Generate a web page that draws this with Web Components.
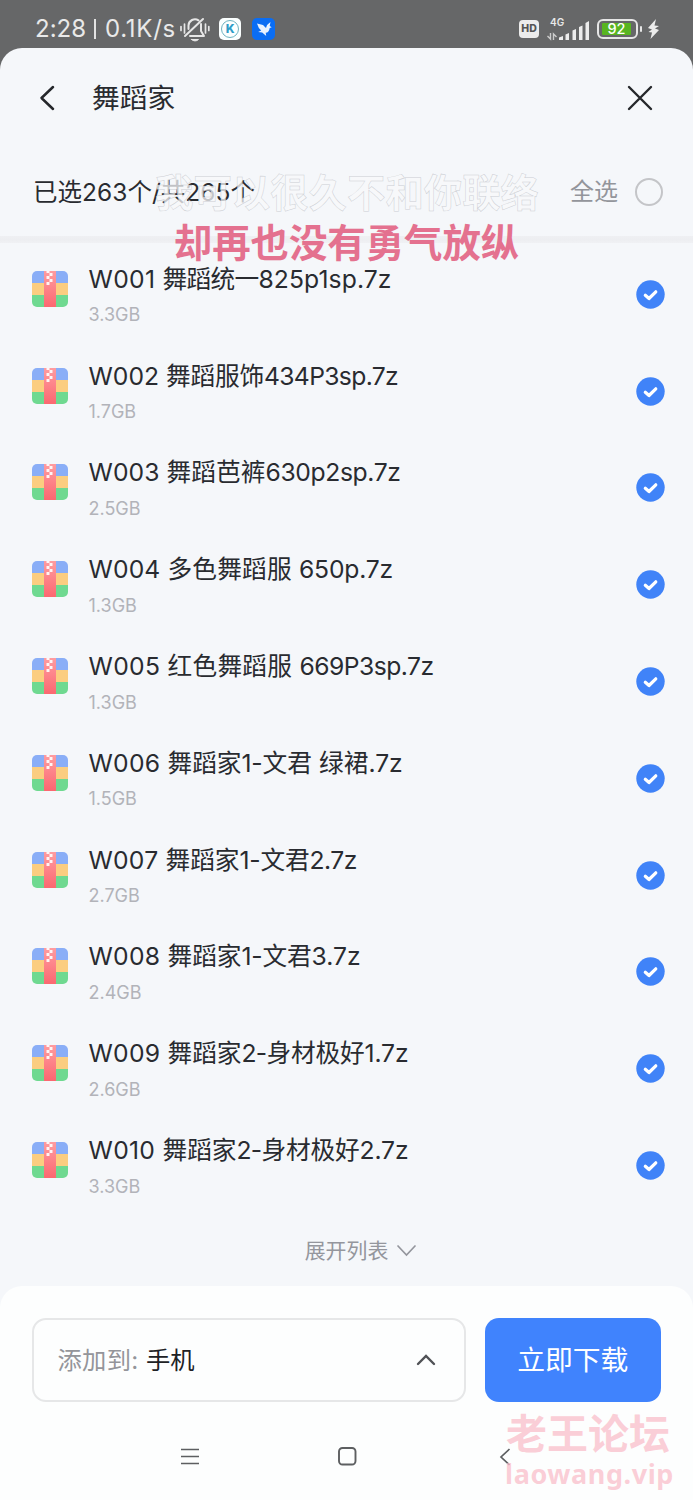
<!DOCTYPE html>
<html lang="zh-CN">
<head>
<meta charset="utf-8">
<title>舞蹈家</title>
<style>
html, body { margin: 0; padding: 0; }
body { width: 693px; height: 1500px; overflow: hidden; background: #666768; font-family: Inter, "Noto Sans CJK SC", sans-serif; color: #292b30; }
</style>
</head>
<body>
<download-app></download-app>
<script>
class FitText extends HTMLElement {
  connectedCallback() {
    const root = this.attachShadow({ mode: 'open' });
    root.innerHTML = `<style>:host{display:inline-block;white-space:pre;line-height:1}span{display:inline-block}</style><span><slot></slot></span>`;
    const span = root.querySelector('span');
    const goal = +this.getAttribute('w');
    const natural = span.getBoundingClientRect().width;
    span.style.letterSpacing = (goal - natural) / this.textContent.length + 'px';
  }
}
customElements.define('fit-text', FitText);

class StatusBar extends HTMLElement {
  connectedCallback() {
    this.attachShadow({ mode: 'open' }).innerHTML = `
<style>
:host{display:flex;height:48px;box-sizing:border-box;padding:9px 34px 0 35px;align-items:center;color:#e9e9e9;background:#666768}
.time{font-size:24px;margin-right:4px;white-space:pre;display:flex;align-items:center}
.bar{width:2px;height:20px;background:#e2e2e2;margin:0 9px 0 8px}
.k{margin-left:9px}.b{margin-left:11px}
svg{display:block;flex:none}
.gap{flex:1}
.hd{width:20px;height:18px;border-radius:4px;background:#ececec;color:#555;font:800 10.500px/18px Inter,sans-serif;text-align:center;margin-right:8px}
.net{display:grid;width:42px;height:24px;margin-right:8px;position:relative}
.net span{position:absolute;left:3px;top:0;font:600 10px/10px Inter,sans-serif}
.bat{display:flex;align-items:center}
.cell{width:41px;height:20px;box-sizing:border-box;border:2px solid #e6e6e6;border-radius:6px;padding:2px 4px 2px 3px}
.fill{height:12px;width:29px;background:#58b520;font:500 14.500px/12px Inter,sans-serif;color:#fff;text-align:center;border-radius:1px}
.tip{width:2px;height:6px;background:#e6e6e6;margin:0 6px 0 2px;border-radius:1px}
</style>
<span class="time"><fit-text w="51">2:28</fit-text><div class="bar"></div><fit-text w="71">0.1K/s</fit-text></span>
<svg width="30" height="28" viewBox="0 0 30 28" fill="none" stroke="#e6e6e6" stroke-width="2" stroke-linecap="round" stroke-linejoin="round"><path d="M8.500 14V10.500a6.500 6.500 0 0 1 10-5.200M21 9v7l3 5H10M5 21 23 4"/><path d="M11.500 24.500h7q-3.500 3-7 0z" fill="#e6e6e6" stroke-width="1"/><path d="M4.500 9v9M1 11.500v4M25.500 9v9M28.800 11.500v4" stroke-width="1.700"/></svg>
<svg class="k" width="22" height="22" viewBox="0 0 22 22"><rect width="22" height="22" rx="5" fill="#fbffff"/><circle cx="11" cy="11" r="8.500" fill="none" stroke="#5fa9b8" stroke-width=".9"/><text x="11.300" y="15.300" text-anchor="middle" font-family="Inter" font-size="12" font-weight="800" fill="#2e9dc8">K</text></svg>
<svg class="b" width="23" height="22" viewBox="0 0 23 22"><rect width="23" height="22" rx="5" fill="#0a6df3"/><path d="M5 5.500 11 7l3 3q1-4 4.500-6l-.8 4 2 1.300-2 .7q-.7 4.500-4 4.800l.5 3.200-4-3.500-4-.5 3-1.500q-3-2.500-4.200-7z" fill="#e8f2ff"/></svg>
<div class="gap"></div>
<div class="hd">HD</div>
<div class="net"><span>4G</span><svg width="42" height="24" viewBox="0 0 42 24" fill="#ececec"><path d="M12 20.500 16 19v4h-4zM18.500 17.500 22 16v7h-3.500zM25.500 13.500 29 12v11h-3.500zM32 10l3.500-1.500V23H32zM38.500 6 42 4v19h-3.500z"/><path d="M3.500 16v6l-3-3M6.500 23v-6l3 3" fill="none" stroke="#ccc" stroke-width="1.400"/></svg></div>
<div class="bat"><div class="cell"><div class="fill">92</div></div><div class="tip"></div>
<svg width="11" height="20" viewBox="0 0 11 20"><path d="M8 0 0 9l4 1.500L.5 13 4 13.500 2.500 20 11 11 7 9.500 11 7 6.500 6.500z" fill="#ececec"/></svg></div>`;
  }
}
customElements.define('status-bar', StatusBar);

class SheetHeader extends HTMLElement {
  connectedCallback() {
    this.attachShadow({ mode: 'open' }).innerHTML = `
<style>
:host{display:block;height:188px}
.top{height:99px;display:flex;align-items:center;padding:0 40px 0 39px;box-sizing:border-box}
h1{font-size:27.700px;line-height:40px;font-weight:400;margin:0 0 0 37px;flex:1}
.sum{height:89px;box-sizing:border-box;padding:0 30px 0 33px;display:flex;align-items:center;font-size:24.500px}
.n{flex:1}.all{color:#93959b;margin-right:17px;line-height:30px;margin-top:1px;font-size:24px}
i{width:28px;height:28px;border-radius:50%;border:2px solid #c4c5c8;box-sizing:border-box}
svg{display:block}
</style>
<div class="top">
<svg width="16" height="26" viewBox="0 0 16 26" fill="none" stroke="#25272b" stroke-width="2.500" stroke-linecap="round" stroke-linejoin="round"><path d="M14 2 2.500 13 14 24"/></svg>
<h1><slot name="title"></slot></h1>
<svg width="26" height="26" viewBox="0 0 26 26" fill="none" stroke="#25272b" stroke-width="2.400" stroke-linecap="round"><path d="M2 2l22 22M24 2 2 24"/></svg>
</div>
<div class="sum"><span class="n"><fit-text w="222">已选263个/共265个</fit-text></span><span class="all">全选</span><i></i></div>`;
  }
}
customElements.define('sheet-header', SheetHeader);

class FileRow extends HTMLElement {
  connectedCallback() {
    const parts = JSON.parse(this.getAttribute('parts'));
    this.attachShadow({ mode: 'open' }).innerHTML = `
<style>
:host{display:flex;height:96.8px;box-sizing:border-box;padding:0 28px 0 32px}
.ico{margin-top:27.800px}
.txt{flex:1;margin-left:20.500px;padding-top:19.900px}
.t{display:block;height:32px;line-height:32px;font-size:24.700px;white-space:pre}
.s{height:24px;margin-top:8.500px;line-height:24px;font-size:18px;color:#b2b3b9}
.ok{margin-top:36.900px}
svg{display:block;flex:none}
</style>
<svg class="ico" width="36" height="36" viewBox="0 0 36 36"><defs><clipPath id="c"><rect width="36" height="36" rx="5"/></clipPath><linearGradient id="g" x2="0" y2="1"><stop stop-color="#ff9ca0"/><stop offset="1" stop-color="#fb6870"/></linearGradient></defs><g clip-path="url(#c)"><path fill="#8aaef7" d="M0 0h36v12H0z"/><path fill="#fbcd80" d="M0 12h36v12H0z"/><path fill="#6fd990" d="M0 24h36v12H0z"/><path fill="url(#g)" d="M12 0h12v36H12z"/><path fill="#fff" opacity=".9" d="M14.500 0h3v2h-3zM17.500 2h3v3h-3zM14.500 5h3v3h-3zM17.500 8h3v3h-3zM14.500 11h3v3h-3z"/></g></svg>
<div class="txt"><div class="t">${parts.map(p => `<fit-text w="${p[1]}">${p[0]}</fit-text>`).join('')}</div>
<div class="s"><slot></slot></div></div>
<svg class="ok" width="29" height="29" viewBox="0 0 29 29"><circle cx="14.500" cy="14.500" r="14.200" fill="#4083f8"/><path d="M9.300 15.300l3.700 3.200 6.800-6.700" fill="none" stroke="#fff" stroke-width="3.200" stroke-linecap="round" stroke-linejoin="round"/></svg>`;
  }
}
customElements.define('file-row', FileRow);

class ExpandButton extends HTMLElement {
  connectedCallback() {
    this.attachShadow({ mode: 'open' }).innerHTML = `
<style>:host{display:flex;justify-content:center;align-items:center;height:75px;padding-top:5px;box-sizing:border-box;font-size:20.900px;line-height:30px;color:#94969d;padding-left:28px}svg{margin-left:9px}</style>
<slot></slot><svg width="19" height="12" viewBox="0 0 19 12" fill="none" stroke="#94969d" stroke-width="1.700" stroke-linecap="round"><path d="M1 1l8.500 9L18 1"/></svg>`;
  }
}
customElements.define('expand-button', ExpandButton);

class ActionPanel extends HTMLElement {
  connectedCallback() {
    this.attachShadow({ mode: 'open' }).innerHTML = `
<style>
:host{display:block;height:214px;background:#fdfefe;border-radius:22px 22px 0 0;box-sizing:border-box;padding-top:32px}
.row{display:flex;height:84.500px;padding:0 32px;gap:18.500px}
.sel{flex:1;box-sizing:border-box;border:2px solid #e6e7e8;border-radius:14px;display:flex;align-items:center;padding:0 28px 0 23.500px;font-size:24.300px;color:#94959a}
.sel b{font-weight:400;color:#202124;flex:1;margin-left:7.500px;line-height:30px}
.go{width:176.500px;border-radius:14px;background:#4083fd;color:#fff;display:flex;align-items:center;justify-content:center;font-size:27.800px;line-height:40px;box-sizing:border-box}
nav{display:grid;grid-template-columns:181px 157px 161px 1fr;align-items:center;padding-top:7px;height:102px;box-sizing:border-box}
nav svg:first-of-type{grid-column:2}
svg{display:block}
</style>
<div class="row"><div class="sel"><fit-text w="81">添加到:</fit-text><b>手机</b><svg width="20" height="12" viewBox="0 0 20 12" fill="none" stroke="#505256" stroke-width="2.400" stroke-linecap="round"><path d="M2 10l8-8 8 8"/></svg></div><div class="go">立即下载</div></div>
<nav><svg width="18" height="18" viewBox="0 0 18 18" stroke="#5d5f61" stroke-width="1.700" fill="none"><path d="M0 1.500h18M0 8.500h18M0 15.500h18"/></svg><svg width="19" height="19" viewBox="0 0 19 19" stroke="#5d5f61" stroke-width="1.900" fill="none"><rect x="1" y="1" width="16.500" height="16.500" rx="3.500"/></svg><svg width="12" height="18" viewBox="0 0 12 18" stroke="#5d5f61" stroke-width="1.700" fill="none"><path d="M10.500 1 2 9l8.500 8"/></svg></nav>`;
  }
}
customElements.define('action-panel', ActionPanel);

class LyricOverlay extends HTMLElement {
  connectedCallback() {
    this.attachShadow({ mode: 'open' }).innerHTML = `
<style>:host{position:absolute;left:0;top:165px;width:693px;display:flex;flex-direction:column;align-items:center;font-family:"Noto Sans CJK SC",sans-serif;font-weight:700;font-size:38.400px;line-height:50px;pointer-events:none}
.a{height:50px;padding-left:1px;color:rgba(248,249,251,.75);-webkit-text-stroke:.5px rgba(175,177,184,.6)}
.b{height:50px;color:#e4718f}</style>
<div class="a"><slot name="past"></slot></div><div class="b"><slot></slot></div>`;
  }
}
customElements.define('lyric-overlay', LyricOverlay);

class SiteMark extends HTMLElement {
  connectedCallback() {
    this.attachShadow({ mode: 'open' }).innerHTML = `
<style>:host{position:absolute;left:506px;top:1410px;width:170px;font-weight:700;color:rgba(250,190,202,.75);font-family:"Noto Sans","Noto Sans CJK SC",sans-serif;pointer-events:none}
.a{font-size:41px;line-height:46px;height:47px;white-space:nowrap}.b{font-size:27px;line-height:34px;white-space:nowrap;margin-left:-1px}</style>
<div class="a">老王论坛</div><div class="b"><fit-text w="169">laowang.vip</fit-text></div>`;
  }
}
customElements.define('site-mark', SiteMark);

const FILES = [
  [[['W001 ', 74], ['舞蹈统一', 96], ['825p1sp.7z', 133]], '3.3GB'],
  [[['W002 ', 77.5], ['舞蹈服饰', 98], ['434P3sp.7z', 134]], '1.7GB'],
  [[['W003 ', 78], ['舞蹈芭裤', 99], ['630p2sp.7z', 135]], '2.5GB'],
  [[['W004 ', 79], ['多色舞蹈服 ', 131.5], ['650p.7z', 94]], '1.3GB'],
  [[['W005 ', 79], ['红色舞蹈服 ', 132], ['669P3sp.7z', 134]], '1.3GB'],
  [[['W006 ', 79], ['舞蹈家', 74], ['1-', 21], ['文君 绿裙', 106], ['.7z', 34]], '1.5GB'],
  [[['W007 ', 77], ['舞蹈家', 74], ['1-', 21], ['文君', 49], ['2.7z', 47.5]], '2.7GB'],
  [[['W008 ', 79], ['舞蹈家', 74], ['1-', 21], ['文君', 49], ['3.7z', 49]], '2.4GB'],
  [[['W009 ', 79], ['舞蹈家', 74], ['2-', 25], ['身材极好', 98], ['1.7z', 44]], '2.6GB'],
  [[['W010 ', 74], ['舞蹈家', 74], ['2-', 25], ['身材极好', 98], ['2.7z', 49]], '3.3GB']
];

class DownloadApp extends HTMLElement {
  connectedCallback() {
    this.attachShadow({ mode: 'open' }).innerHTML = `
<style>
:host{display:block;width:693px;height:1500px;position:relative;overflow:hidden}
main{height:1452px;background:#f5f7fa;border-radius:22px 22px 0 0;overflow:hidden}
hr{border:0;margin:0;height:7px;background:linear-gradient(#eff0f3,#edeef1 50%,#f0f1f4)}
</style>
<status-bar></status-bar>
<main><sheet-header><span slot="title">舞蹈家</span></sheet-header><hr>
${FILES.map(f => `<file-row parts='${JSON.stringify(f[0])}'>${f[1]}</file-row>`).join('')}
<expand-button>展开列表</expand-button><action-panel></action-panel></main>
<lyric-overlay><span slot="past">我可以很久不和你联络</span>却再也没有勇气放纵</lyric-overlay>
<site-mark></site-mark>`;
  }
}
customElements.define('download-app', DownloadApp);
</script>
</body>
</html>
